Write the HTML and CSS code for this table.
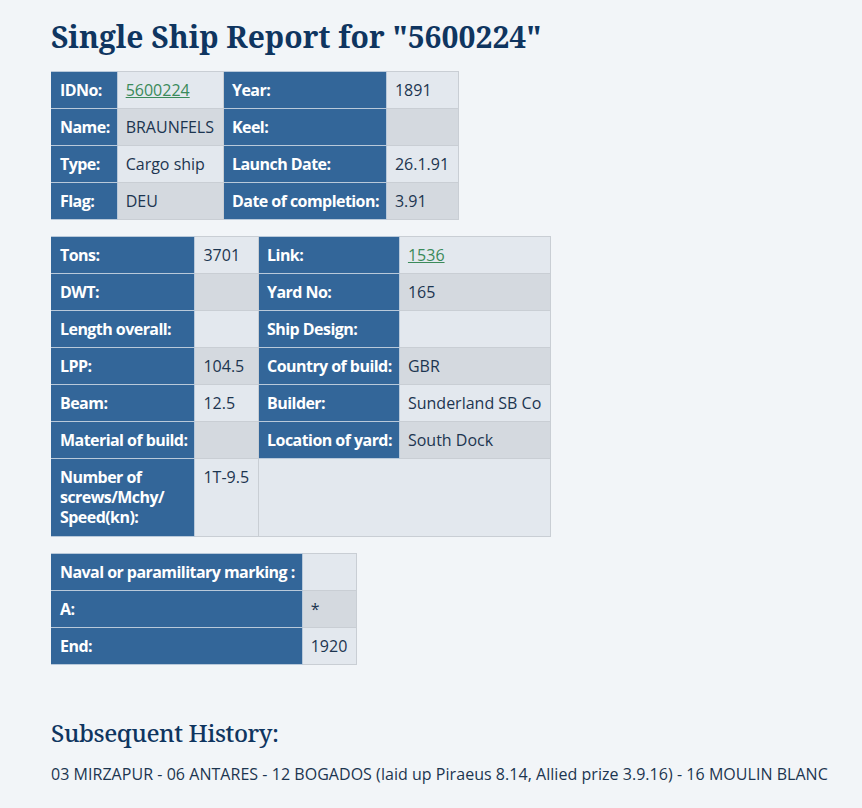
FILE: index.html
```html
<!DOCTYPE html>
<html lang="en">
<head>
<meta charset="utf-8">
<title>Single Ship Report</title>
<link rel="stylesheet" href="styles.css">
</head>
<body>
<main class="page">
  <h1 class="title">Single Ship Report for "5600224"</h1>

  <table class="report">
    <tr><th>IDNo:</th><td><a href="#">5600224</a></td><th>Year:</th><td>1891</td></tr>
    <tr><th>Name:</th><td>BRAUNFELS</td><th>Keel:</th><td></td></tr>
    <tr><th>Type:</th><td>Cargo ship</td><th>Launch Date:</th><td>26.1.91</td></tr>
    <tr><th>Flag:</th><td>DEU</td><th>Date of completion:</th><td>3.91</td></tr>
  </table>

  <table class="report">
    <tr><th>Tons:</th><td>3701</td><th>Link:</th><td><a href="#">1536</a></td></tr>
    <tr><th>DWT:</th><td></td><th>Yard No:</th><td>165</td></tr>
    <tr><th>Length overall:</th><td></td><th>Ship Design:</th><td></td></tr>
    <tr><th>LPP:</th><td>104.5</td><th>Country of build:</th><td>GBR</td></tr>
    <tr><th>Beam:</th><td>12.5</td><th>Builder:</th><td>Sunderland SB Co</td></tr>
    <tr><th>Material of build:</th><td></td><th>Location of yard:</th><td>South Dock</td></tr>
    <tr class="tall"><th class="wrap">Number of screws/Mchy/ Speed(kn):</th><td>1T-9.5</td><td colspan="2"></td></tr>
  </table>

  <table class="report">
    <tr><th>Naval or paramilitary marking :</th><td></td></tr>
    <tr><th>A:</th><td>*</td></tr>
    <tr><th>End:</th><td>1920</td></tr>
  </table>

  <h2 class="subtitle">Subsequent History:</h2>
  <p class="history">03 MIRZAPUR - 06 ANTARES - 12 BOGADOS (laid up Piraeus 8.14, Allied prize 3.9.16) - 16 MOULIN BLANC</p>
</main>
</body>
</html>
```

FILE: styles.css
```css
html, body {
  margin: 0;
  padding: 0;
  background: #f2f5f8;
}

body {
  font-family: "Open Sans", "Noto Sans", sans-serif;
  color: #1c3550;
}

.page {
  padding: 0 16px 0 51px;
  display: flex;
  flex-direction: column;
  align-items: flex-start;
}

.title {
  font-family: "Noto Serif", "DejaVu Serif", serif;
  font-weight: 700;
  font-size: 30px;
  line-height: 40px;
  color: #0f3560;
  margin: 17px 0 14px 0;
  letter-spacing: 0;
}

.report {
  border-collapse: collapse;
  margin-bottom: 16px;
  font-size: 16px;
  line-height: 20px;
}

.report th,
.report td {
  border: 1px solid #c9ced4;
  padding: 8px 7px 8px 8px;
  height: 20px;
  text-align: left;
  vertical-align: top;
  white-space: nowrap;
}

.report td {
  padding-right: 9px;
}

.report th {
  background: #336699;
  color: #ffffff;
  font-weight: 700;
  letter-spacing: -0.55px;
  border-color: #b9c9da;
  border-left-color: #336699;
}

.report th.wrap {
  white-space: normal;
  width: 100px;
}

.report td {
  background: #e3e8ee;
  color: #1c3550;
}

.report tr:nth-child(even) td {
  background: #d4d9df;
}

.report tr.tall td,
.report tr.tall th {
  height: 61px;
}

.report a {
  color: #3a8a5a;
  text-decoration: underline;
}

.subtitle {
  font-family: "Noto Serif", "DejaVu Serif", serif;
  font-weight: 500;
  font-size: 24px;
  line-height: 32px;
  color: #0f3560;
  margin: 36px 0 14px 0;
  letter-spacing: -0.4px;
}

.history {
  margin: 0;
  font-size: 16px;
  line-height: 22px;
  letter-spacing: 0.04px;
  color: #1c3550;
}
```
